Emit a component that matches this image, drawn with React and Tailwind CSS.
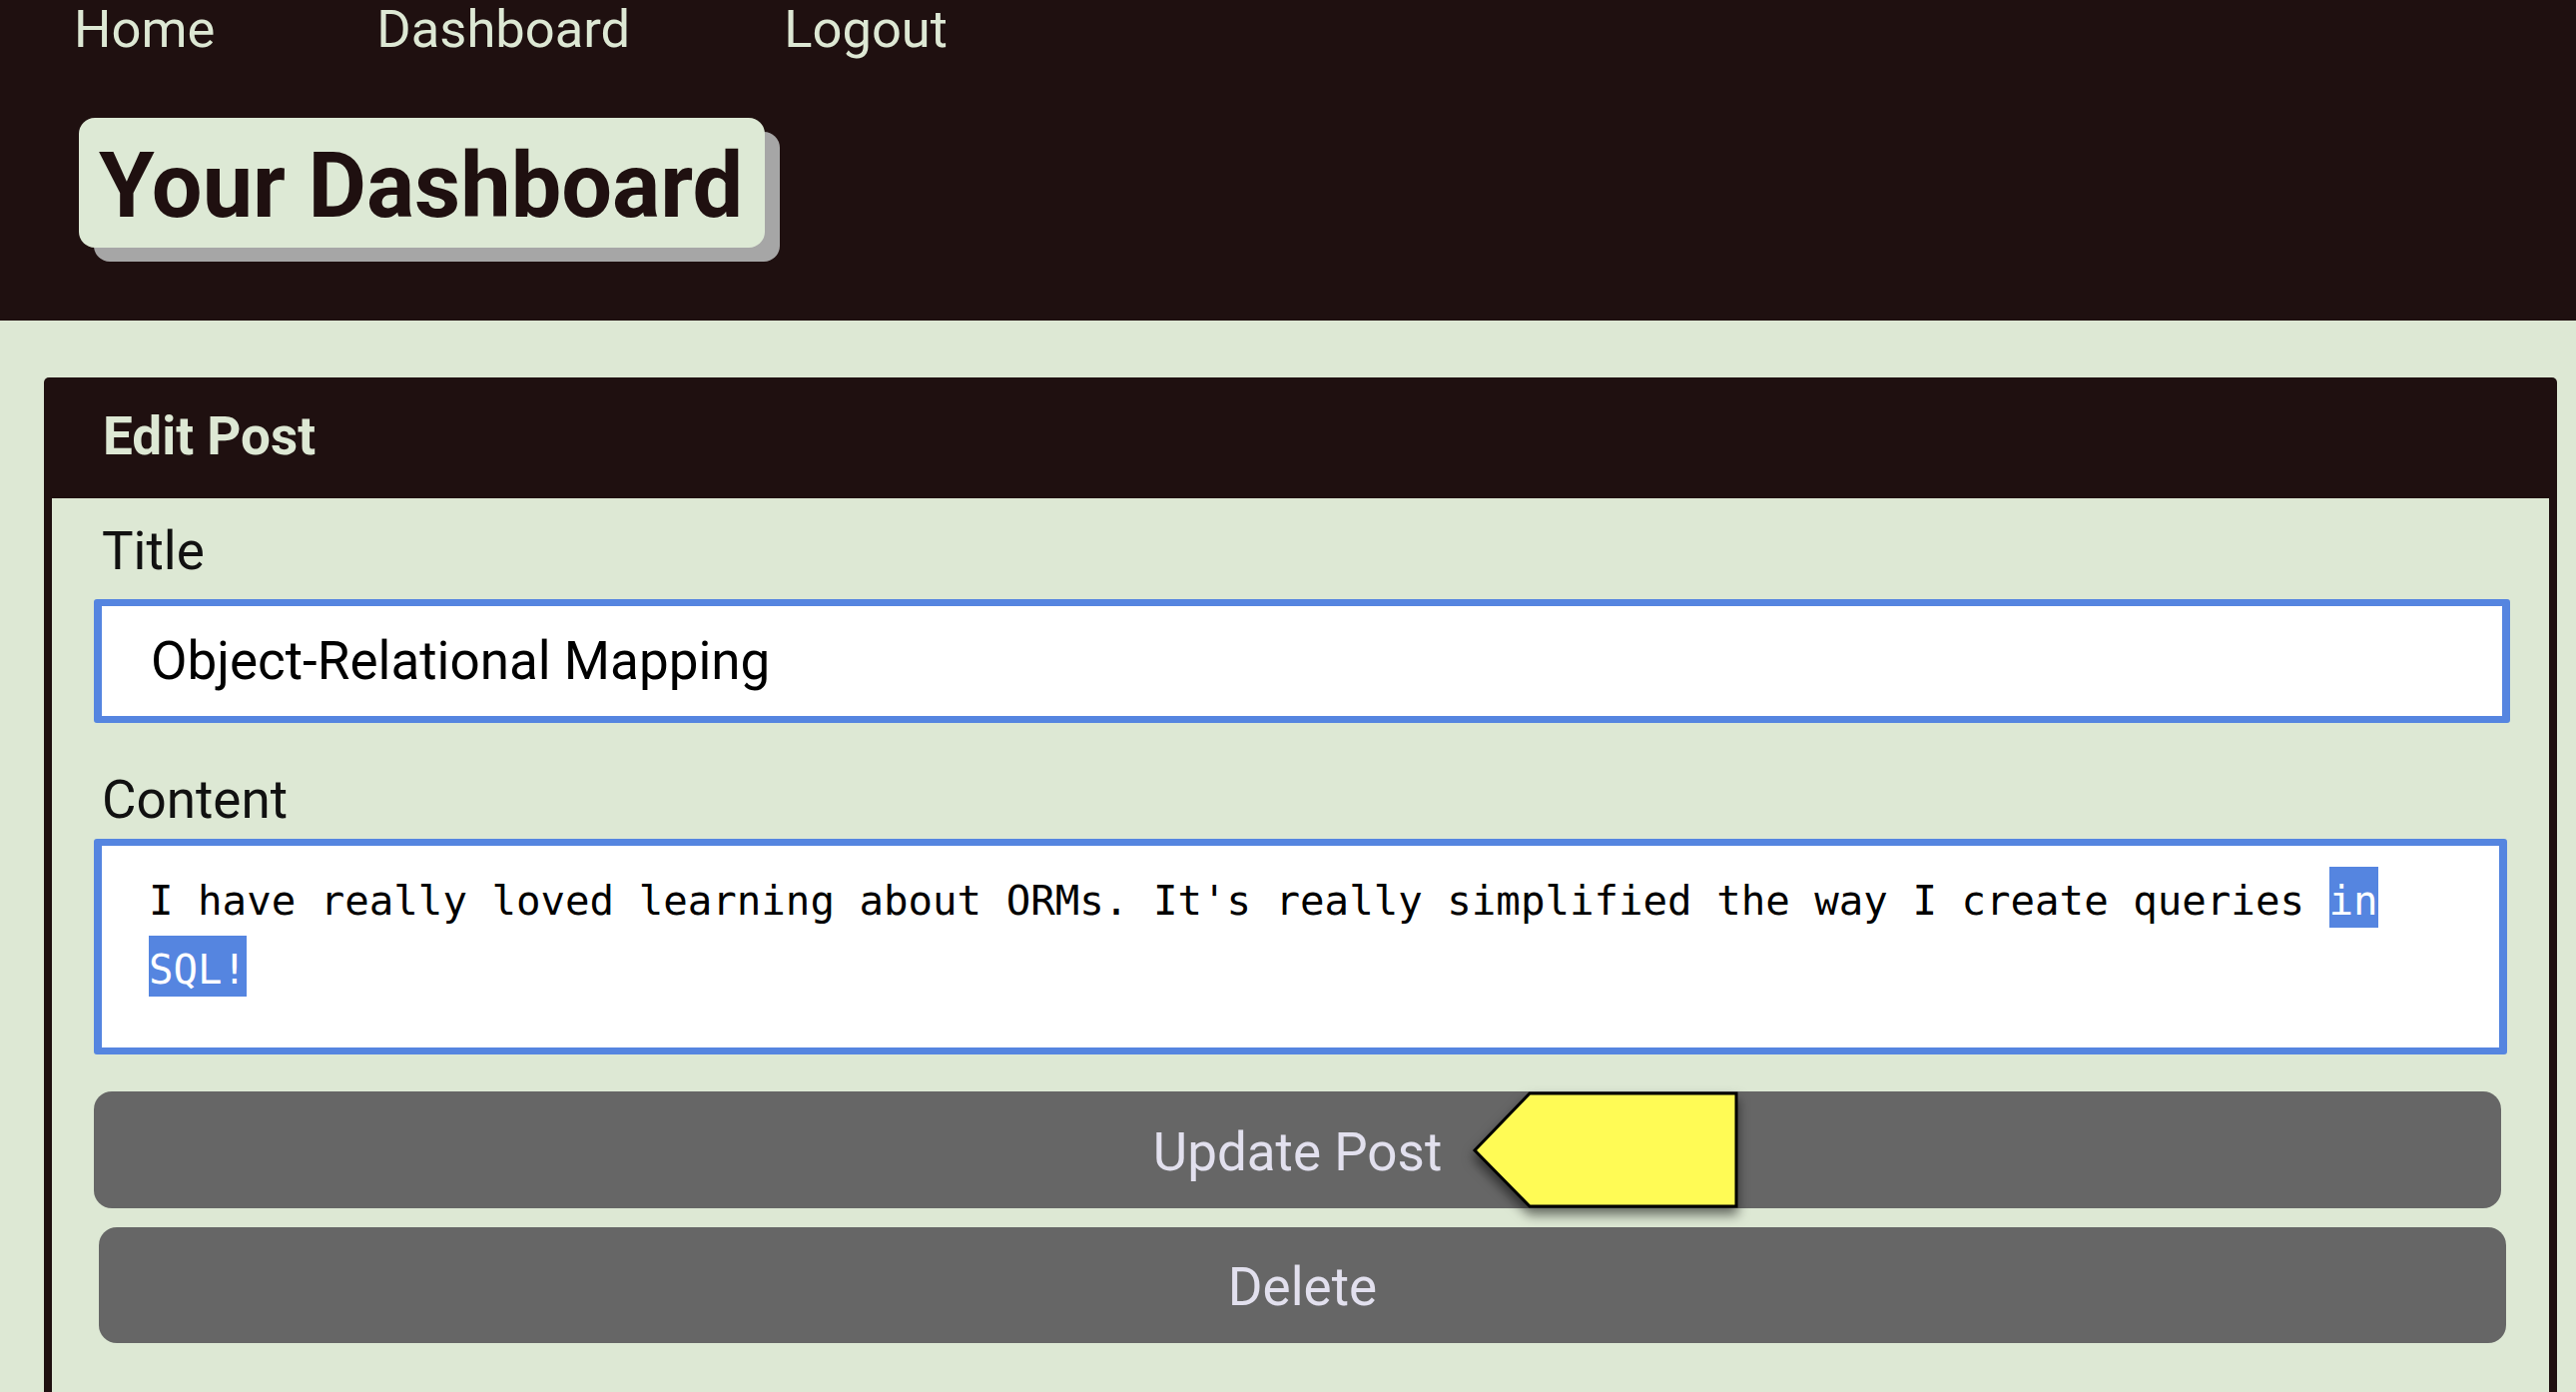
import React from "react";

export default function App() {
  return (
    <div className="h-[1394px] w-full overflow-hidden bg-[#dde8d4] font-['Roboto',sans-serif]">
      {/* Header */}
      <header className="h-[321px] bg-[#1f1010]">
        <nav className="flex pl-[74px] pt-[5px] text-[52.5px] leading-[48px] text-[#dde8d4]">
          <a>Home</a>
          <a className="ml-[162px]">Dashboard</a>
          <a className="ml-[154px]">Logout</a>
        </nav>
        <div className="ml-[79px] mt-[65px] inline-block">
          <div className="h-[130px] rounded-[16px] bg-[#dde9d5] pl-[20px] pr-[22px] pt-[8px] shadow-[15px_14px_0_#a6a6a6]">
            <h1 className="text-[90px] font-bold leading-[122px] tracking-[0px] text-[#1f1010]">
              Your Dashboard
            </h1>
          </div>
        </div>
      </header>

      {/* Card */}
      <section className="ml-[44px] mr-[19px] mt-[57px] rounded-t-[5px] border-x-[8px] border-[#1f1010]">
        <div className="h-[121px] bg-[#1f1010] pl-[51px] pt-[33px] text-[53px] font-bold leading-[53px] text-[#dde8d4]">
          Edit Post
        </div>
        <div className="h-[900px] pl-[42px] pr-[39px]">
          <div className="ml-[8px] pt-[27px] text-[53px] leading-[53px] text-[#111111]">Title</div>
          <div className="mt-[21px] flex h-[124px] items-center rounded-[3px] border-[7px] border-x-[8px] border-[#5585e0] bg-white pl-[49px] text-[53px] leading-[53px] text-black">
            Object-Relational Mapping
          </div>
          <div className="ml-[8px] mt-[51px] text-[53px] leading-[53px] text-[#111111]">Content</div>
          <div className="mr-[3px] mt-[12px] h-[216px] rounded-[3px] border-[7px] border-x-[8px] border-[#5585e0] bg-white pl-[47px] pt-[21px] font-['DejaVu_Sans_Mono',monospace] text-[40.76px] leading-[69px] text-black">
            <div className="whitespace-pre">
              I have really loved learning about ORMs. It's really simplified the way I create queries{" "}
              <span className="bg-[#5585e0] pb-[3px] pt-[10px] text-white">in</span>
            </div>
            <div className="whitespace-pre">
              <span className="bg-[#5585e0] pb-[3px] pt-[10px] text-white">SQL!</span>
            </div>
          </div>
          <div className="relative mr-[9px] mt-[37px] flex h-[117px] items-center justify-center rounded-[18px] bg-[#666666] pt-[5px] text-[53px] leading-[53px] text-[#e2e0ee]">
            Update Post
            <svg
              className="absolute left-[1380px] top-[-1px] drop-shadow-[0_7px_6px_rgba(0,0,0,0.55)]"
              width="270"
              height="120"
              viewBox="0 0 270 120"
            >
              <polygon
                points="3,60 58,3 265,3 265,116 58,116"
                fill="#fffb55"
                stroke="#000000"
                strokeWidth="3"
                strokeLinejoin="miter"
              />
            </svg>
          </div>
          <div className="ml-[5px] mr-[4px] mt-[19px] flex h-[116px] items-center justify-center rounded-[18px] bg-[#666666] pt-[5px] text-[53px] leading-[53px] text-[#e2e0ee]">
            Delete
          </div>
        </div>
      </section>
    </div>
  );
}
